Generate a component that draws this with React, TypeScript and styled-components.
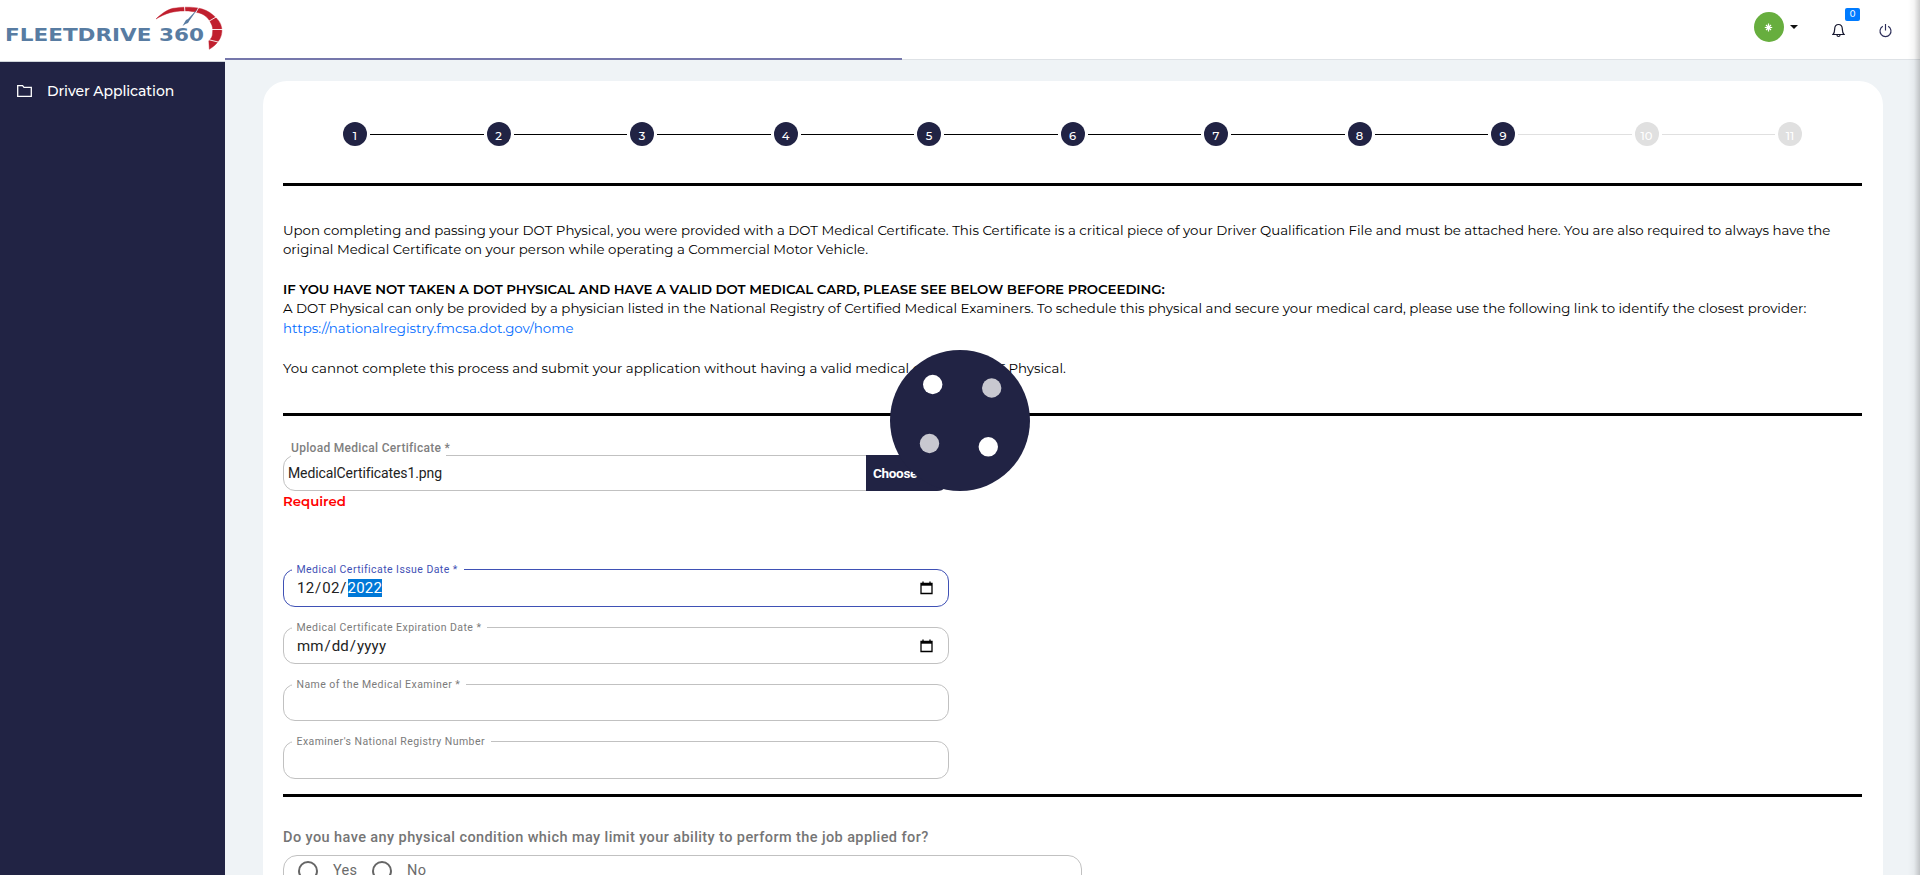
import React from "react";
import styled, { createGlobalStyle } from "styled-components";

const navy = "#212344";
const brand = `Montserrat, Inter, "Open Sans", sans-serif`;

const GlobalStyle = createGlobalStyle`
  * { box-sizing: border-box; }
  html, body { margin: 0; padding: 0; height: 875px; overflow: hidden; background: #eff3f6; }
  body { font-family: ${brand}; color: #000; }
`;

const Shell = styled.div`
  position: relative;
  display: flex;
  width: 1920px;
  height: 875px;
  overflow: hidden;
`;

const Sidebar = styled.aside`
  width: 225px;
  flex: none;
  display: flex;
  flex-direction: column;
  background: ${navy};
`;

const LogoBox = styled.div`
  height: 62px;
  flex: none;
  background: #fff;
  border-bottom: 1px solid #cfd5da;
`;

const NavItem = styled.a`
  display: flex;
  align-items: center;
  gap: 15px;
  height: 58px;
  padding: 0 0 0 17px;
  color: #fff;
  font-size: 14px;
  font-weight: 500;
  letter-spacing: -0.07px;
`;

const Main = styled.main`
  flex: 1;
  display: flex;
  flex-direction: column;
  min-width: 0;
`;

const Header = styled.header`
  position: relative;
  height: 60px;
  flex: none;
  display: flex;
  justify-content: flex-end;
  padding-right: 28px;
  background: #fff;
  border-bottom: 1px solid #dee2e6;
`;

const Progress = styled.div`
  position: absolute;
  left: 0;
  top: 58px;
  width: 677px;
  height: 2px;
  background: #7577ab;
`;

const Profile = styled.div`
  display: flex;
  align-items: center;
  gap: 6px;
  height: 30px;
  margin: 12px 34px 0 0;
`;

const Avatar = styled.div`
  display: flex;
  width: 30px;
  height: 30px;
  border-radius: 50%;
  background: #67ae3e;
`;

const Caret = styled.i`
  border-top: 4px solid #111;
  border-left: 4px solid transparent;
  border-right: 4px solid transparent;
`;

const IconSlot = styled.div<{ $gap?: number }>`
  position: relative;
  height: 16px;
  margin: 23px ${(p) => p.$gap ?? 0}px 0 0;
`;

const Badge = styled.span`
  position: absolute;
  left: 13px;
  top: -15px;
  width: 15px;
  height: 13px;
  border-radius: 2px;
  background: #007bff;
  color: #fff;
  font-size: 8.5px;
  font-weight: 500;
  line-height: 13px;
  text-align: center;
`;

const Card = styled.section`
  display: flex;
  flex-direction: column;
  width: 1620px;
  height: 900px;
  flex: none;
  margin: 21px 0 0 38px;
  padding: 0 21px 0 20px;
  border-radius: 24px;
  background: #fff;
`;

const Stepper = styled.div`
  display: flex;
  align-items: center;
  gap: 3px;
  height: 24px;
  margin: 41px 60px 37px;
`;

const StepDot = styled.div<{ $on: boolean }>`
  width: 24px;
  height: 24px;
  flex: none;
  padding-top: 2px;
  border-radius: 50%;
  background: ${(p) => (p.$on ? navy : "#e0e0e0")};
  color: #fff;
  font-size: 11.5px;
  font-weight: 500;
  line-height: 24px;
  text-align: center;
`;

const StepLine = styled.div<{ $on: boolean }>`
  flex: 1;
  height: 1px;
  background: ${(p) => (p.$on ? "#000" : "#e0e0e0")};
`;

const Rule = styled.hr`
  width: 100%;
  height: 3px;
  flex: none;
  margin: 0;
  border: 0;
  background: #000;
`;

const Copy = styled.div`
  height: 227px;
  padding-top: 33.8px;
  font-size: 13.35px;
`;

const Line = styled.div<{ $bold?: boolean; $gap?: number }>`
  height: 19.5px;
  line-height: 20px;
  margin-bottom: ${(p) => p.$gap ?? 0}px;
  white-space: nowrap;
  font-weight: ${(p) => (p.$bold ? 600 : 400)};
  letter-spacing: ${(p) => (p.$bold ? -0.045 : 0)}px;
`;

const Link = styled.a`
  color: #006bff;
`;

const Upload = styled.div`
  position: relative;
  display: flex;
  justify-content: space-between;
  width: 666px;
  height: 36px;
  margin-top: 39px;
  padding-left: 4px;
  border: 1px solid #c1c1c1;
  border-radius: 12px;
  font: 14px/35px Roboto, sans-serif;
  letter-spacing: -0.1px;
  color: #222;
`;

const UploadLabel = styled.label`
  position: absolute;
  left: 7px;
  top: -17px;
  width: 155px;
  height: 18px;
  background: #fff;
  font: 500 12px/18px Roboto, sans-serif;
  letter-spacing: 0.3px;
  color: #808080;
  white-space: nowrap;
`;

const ChooseButton = styled.button`
  width: 83px;
  height: 36px;
  margin: -1px -1px 0 0;
  padding: 0 0 0 7px;
  border: 0;
  border-radius: 0 12px 12px 0;
  background: ${navy};
  color: #fff;
  font: 700 13.5px/34px Roboto, sans-serif;
  letter-spacing: -0.3px;
  text-align: left;
  white-space: nowrap;
`;

const ErrorText = styled.div`
  height: 20px;
  margin-bottom: 58px;
  color: #f00;
  font-size: 13.333px;
  font-weight: 600;
  line-height: 20px;
`;

const Field = styled.div<{ $h: number; $gap: number; $focus?: boolean }>`
  position: relative;
  display: flex;
  align-items: center;
  justify-content: space-between;
  width: 666px;
  height: ${(p) => p.$h}px;
  flex: none;
  margin-bottom: ${(p) => p.$gap}px;
  padding: 0 15px 0 13px;
  border: 1px solid ${(p) => (p.$focus ? "#3f51b5" : "#c1c1c1")};
  border-radius: 12px;
  font: 15px/18px Roboto, sans-serif;
  letter-spacing: 0.2px;
  color: #222;
`;

const FieldLabel = styled.label<{ $w: number; $focus?: boolean }>`
  position: absolute;
  left: 8px;
  top: -7px;
  width: ${(p) => p.$w}px;
  height: 14px;
  padding-left: 4.5px;
  background: #fff;
  font-size: 10.5px;
  line-height: 13px;
  letter-spacing: 0.44px;
  white-space: nowrap;
  color: ${(p) => (p.$focus ? "#3f51b5" : "#7b7b7b")};
`;

const Slash = styled.span`
  margin: 0 0.8px;
`;

const Selected = styled.span`
  display: inline-block;
  background: #0078d7;
  color: #fff;
`;

const Question = styled.div`
  height: 58px;
  padding-top: 31px;
  font: 500 14.5px/20px Roboto, sans-serif;
  letter-spacing: 0.41px;
  color: #757575;
  white-space: nowrap;
`;

const Options = styled.div`
  display: flex;
  align-items: center;
  width: 799px;
  height: 44px;
  flex: none;
  padding: 0 0 13px 14px;
  border: 1px solid #c1c1c1;
  border-radius: 14px;
  font: 14.5px/20px Roboto, sans-serif;
  letter-spacing: 0.3px;
  color: #6b6b6b;
`;

const Radio = styled.span`
  width: 20px;
  height: 20px;
  border: 2px solid #666;
  border-radius: 50%;
`;

const OptionText = styled.span<{ $w: number }>`
  width: ${(p) => p.$w}px;
  padding-left: 15px;
`;

const Loader = styled.div`
  position: absolute;
  left: 890px;
  top: 350px;
  width: 140px;
  height: 141px;
`;

const EdgeShadow = styled.div`
  position: absolute;
  right: 0;
  top: 0;
  width: 12px;
  height: 875px;
  background: linear-gradient(to right, rgba(0, 0, 0, 0), rgba(0, 0, 0, 0.04) 50%, rgba(0, 0, 0, 0.2));
`;

const Logo = () => (
  <svg width="225" height="61" viewBox="0 0 225 61">
    <text x="5" y="41" fontFamily="DejaVu Sans" fontWeight="bold" fontSize="17.5" fill="#587ca2" textLength="199" lengthAdjust="spacingAndGlyphs">FLEETDRIVE 360</text>
    <path d="M156 19C162 13 168 9.500 173 8.300C181 6.800 191 6.800 198 8C204 9 209 11.500 213 15C218 19 221 23 221.700 28C222.500 33 221 38 218 41.700C216 44.500 213 47 209.300 49.300L208.800 40.700C211.500 38.500 212.500 36 212.500 33C213 29 212.500 26 211 23.500C209.500 20 207.500 17.500 204.500 15.500C202.500 14 200 13 197 12.500C193 11.300 188 10.800 184 11C179 11 174 11.700 170 12.700C165 14.200 160 16.500 156 19Z" fill="#c01f2e" stroke="#c01f2e" strokeWidth="0.4" />
    <path d="M184.500 6l.4 6M199 7l-4 7M217 16.500l-9.500 5.500M223 29.500h-12M220 42.500l-12-3" stroke="#fff" strokeWidth="0.9" fill="none" />
    <path d="M198 8.500L189.500 20.500L188 23L185.500 24L182.500 26L184.500 22.500L186 20L188 19Z" fill="#587ca2" />
  </svg>
);

const FolderIcon = () => (
  <svg width="15" height="12" viewBox="0 0 15 12" fill="none" stroke="#fff" strokeWidth="1.3">
    <path d="M.7 .7H5.6L7 2.4H14.3V11.3H.7Z" />
  </svg>
);

const BellIcon = () => (
  <svg width="13" height="16" viewBox="0 0 13 16" fill="none" stroke="#16182f" strokeWidth="1.2">
    <path d="M1 11.500C2.600 10 2.600 8.300 2.700 5.800C2.800 3.400 4.300 1.500 6.500 1.500S10.200 3.400 10.300 5.800C10.400 8.300 10.400 10 12 11.500ZM5 12C5 14 8 14 8 12" />
  </svg>
);

const PowerIcon = () => (
  <svg width="13" height="16" viewBox="0 0 13 16" fill="none" stroke="#2b2d58" strokeWidth="1.15">
    <path d="M6.500 1V7.500M3.800 3.300A5.500 5.500 0 1 0 9.200 3.300" />
  </svg>
);

const CalendarIcon = () => (
  <svg width="13" height="14" viewBox="0 0 13 14" fill="none" stroke="#000">
    <path d="M1 2.500H12V12.500H1ZM3 .5V3M10 .5V3" strokeWidth="1.300" />
    <path d="M1 3.500H12" strokeWidth="2.400" />
  </svg>
);

const steps = [1, 2, 3, 4, 5, 6, 7, 8, 9, 10, 11];

export default function App() {
  return (
    <Shell>
      <GlobalStyle />
      <Sidebar>
        <LogoBox><Logo /></LogoBox>
        <NavItem><FolderIcon />Driver Application</NavItem>
      </Sidebar>
      <Main>
        <Header>
          <Progress />
          <Profile>
            <Avatar>
              <svg width="30" height="30" viewBox="0 0 30 30" stroke="#fff" strokeWidth="1.200">
                <path d="M14.500 11.500V19.500M10.800 15.500H18.200M12 13L17 18M17 13L12 18" />
              </svg>
            </Avatar>
            <Caret />
          </Profile>
          <IconSlot $gap={34}><BellIcon /><Badge>0</Badge></IconSlot>
          <IconSlot><PowerIcon /></IconSlot>
        </Header>
        <Card>
          <Stepper>
            {steps.map((n) => (
              <React.Fragment key={n}>
                {n > 1 && <StepLine $on={n < 10} />}
                <StepDot $on={n < 10}>{n}</StepDot>
              </React.Fragment>
            ))}
          </Stepper>
          <Rule />
          <Copy>
            <Line>Upon completing and passing your DOT Physical, you were provided with a DOT Medical Certificate. This Certificate is a critical piece of your Driver Qualification File and must be attached here. You are also required to always have the</Line>
            <Line $gap={20}>original Medical Certificate on your person while operating a Commercial Motor Vehicle.</Line>
            <Line $bold>IF YOU HAVE NOT TAKEN A DOT PHYSICAL AND HAVE A VALID DOT MEDICAL CARD, PLEASE SEE BELOW BEFORE PROCEEDING:</Line>
            <Line>A DOT Physical can only be provided by a physician listed in the National Registry of Certified Medical Examiners. To schedule this physical and secure your medical card, please use the following link to identify the closest provider:</Line>
            <Line $gap={20.5}><Link>https://nationalregistry.fmcsa.dot.gov/home</Link></Line>
            <Line>You cannot complete this process and submit your application without having a valid medical card and DOT Physical.</Line>
          </Copy>
          <Rule />
          <Upload>
            <UploadLabel>Upload Medical Certificate *</UploadLabel>
            <span>MedicalCertificates1.png</span>
            <ChooseButton>Choose File</ChooseButton>
          </Upload>
          <ErrorText>Required</ErrorText>
          <Field $h={38} $gap={20} $focus>
            <FieldLabel $w={172} $focus>Medical Certificate Issue Date *</FieldLabel>
            <span>12<Slash>/</Slash>02<Slash>/</Slash><Selected>2022</Selected></span>
            <CalendarIcon />
          </Field>
          <Field $h={37} $gap={20}>
            <FieldLabel $w={195}>Medical Certificate Expiration Date *</FieldLabel>
            <span>mm<Slash>/</Slash>dd<Slash>/</Slash>yyyy</span>
            <CalendarIcon />
          </Field>
          <Field $h={37} $gap={20}>
            <FieldLabel $w={174}>Name of the Medical Examiner *</FieldLabel>
          </Field>
          <Field $h={38} $gap={15}>
            <FieldLabel $w={199}>Examiner's National Registry Number</FieldLabel>
          </Field>
          <Rule />
          <Question>Do you have any physical condition which may limit your ability to perform the job applied for?</Question>
          <Options>
            <Radio /><OptionText $w={54}>Yes</OptionText>
            <Radio /><OptionText $w={54}>No</OptionText>
          </Options>
        </Card>
      </Main>
      <Loader>
        <svg width="140" height="141" viewBox="0 0 140 141">
          <ellipse cx="70" cy="70.500" rx="70" ry="70.500" fill={navy} />
          <circle cx="42.700" cy="34.500" r="9.700" fill="#fff" />
          <circle cx="101.700" cy="38" r="9.700" fill="#c8c8d0" />
          <circle cx="39.500" cy="93.500" r="9.700" fill="#c8c8d0" />
          <circle cx="98.300" cy="96.800" r="9.700" fill="#fff" />
        </svg>
      </Loader>
      <EdgeShadow />
    </Shell>
  );
}
